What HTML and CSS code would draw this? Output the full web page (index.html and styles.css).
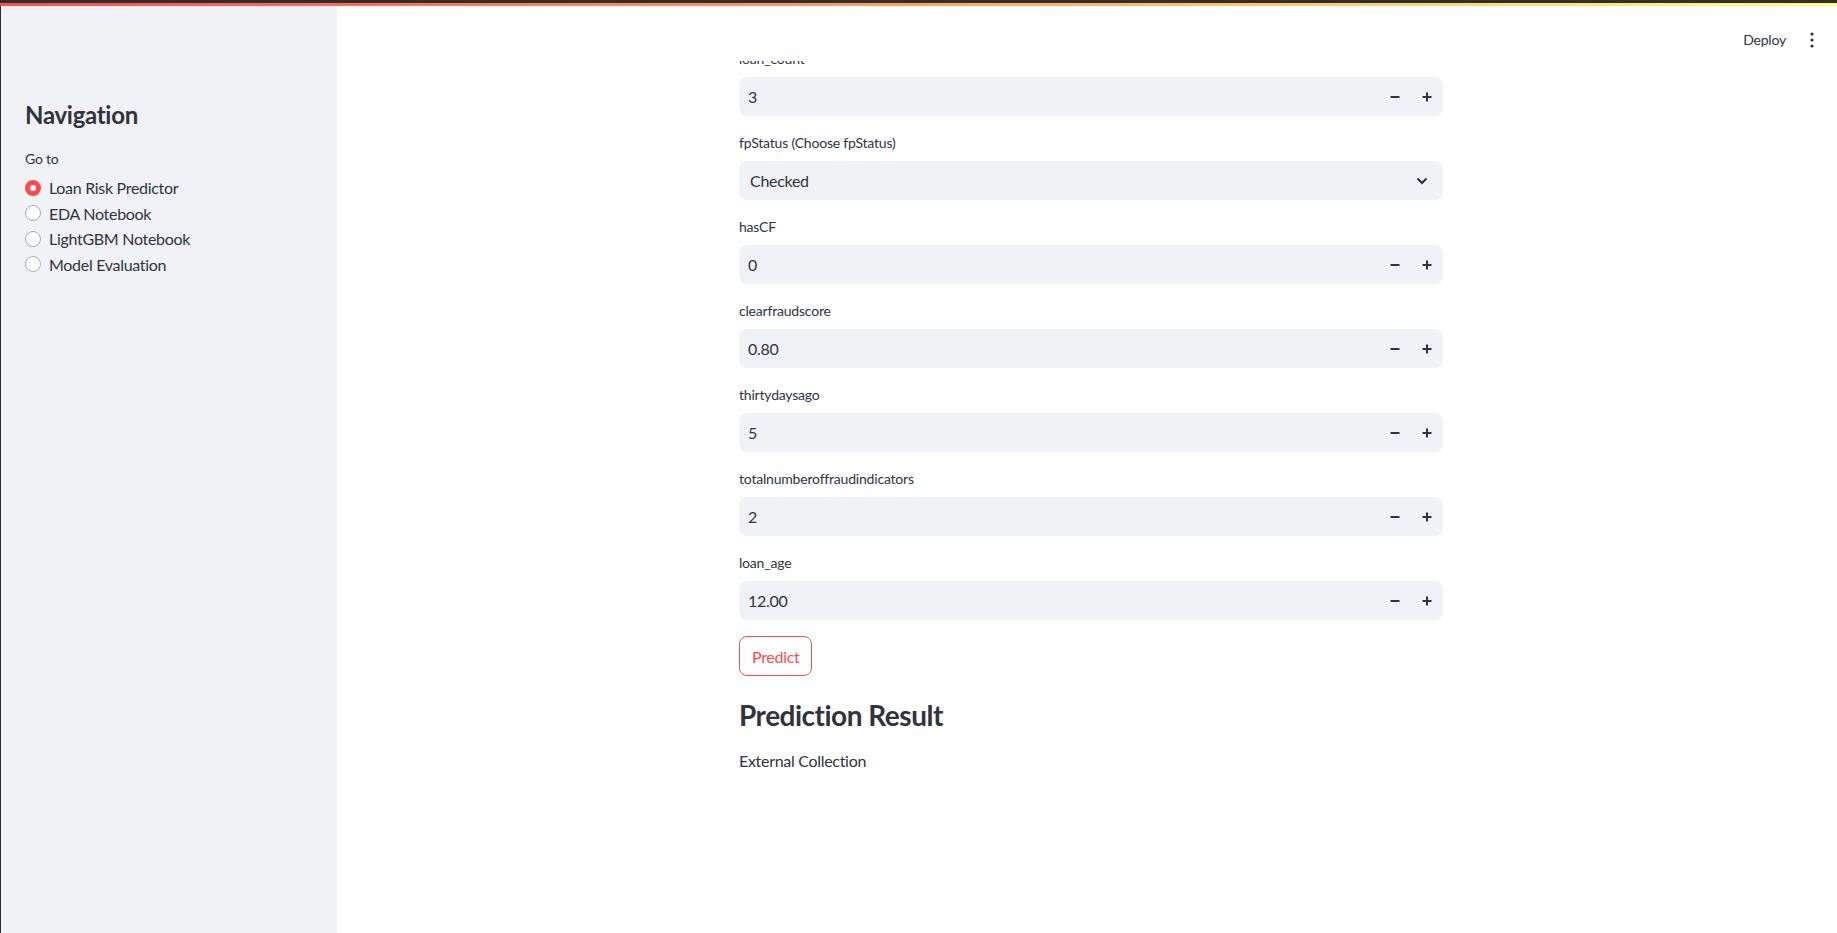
FILE: index.html
```html
<!DOCTYPE html>
<html lang="en">
<head>
<meta charset="utf-8">
<title>Loan Risk Predictor</title>
<link rel="stylesheet" href="styles.css">
</head>
<body>
<div class="topband"></div>
<div class="decoration"></div>
<div class="app">
  <aside class="sidebar">
    <h2 class="side-title">Navigation</h2>
    <div class="side-label">Go to</div>
    <ul class="radio-list">
      <li class="radio-item"><span class="radio radio-on"></span>Loan Risk Predictor</li>
      <li class="radio-item"><span class="radio"></span>EDA Notebook</li>
      <li class="radio-item"><span class="radio"></span>LightGBM Notebook</li>
      <li class="radio-item"><span class="radio"></span>Model Evaluation</li>
    </ul>
  </aside>
  <main class="main">
    <header class="header">
      <span class="deploy">Deploy</span>
      <span class="menu">
        <svg width="4" height="16" viewBox="0 0 4 16"><circle cx="2" cy="2" r="1.6" fill="#31333f"/><circle cx="2" cy="8" r="1.6" fill="#31333f"/><circle cx="2" cy="14" r="1.6" fill="#31333f"/></svg>
      </span>
    </header>
    <div class="block">
      <div class="field">
        <div class="label">loan_count</div>
        <div class="input"><span class="value">3</span><span class="steps"><span class="step"><svg width="10" height="10" viewBox="0 0 10 10"><path d="M0.5 5h9" stroke="#31333f" stroke-width="2"/></svg></span><span class="step"><svg width="10" height="10" viewBox="0 0 10 10"><path d="M0.5 5h9M5 0.5v9" stroke="#31333f" stroke-width="2"/></svg></span></span></div>
      </div>
      <div class="field">
        <div class="label">fpStatus (Choose fpStatus)</div>
        <div class="input select"><span class="value">Checked</span><span class="chev"><svg width="12" height="8" viewBox="0 0 12 8"><path d="M1.5 1.5l4.5 4.5 4.5-4.5" fill="none" stroke="#31333f" stroke-width="2"/></svg></span></div>
      </div>
      <div class="field">
        <div class="label">hasCF</div>
        <div class="input"><span class="value">0</span><span class="steps"><span class="step"><svg width="10" height="10" viewBox="0 0 10 10"><path d="M0.5 5h9" stroke="#31333f" stroke-width="2"/></svg></span><span class="step"><svg width="10" height="10" viewBox="0 0 10 10"><path d="M0.5 5h9M5 0.5v9" stroke="#31333f" stroke-width="2"/></svg></span></span></div>
      </div>
      <div class="field">
        <div class="label">clearfraudscore</div>
        <div class="input"><span class="value">0.80</span><span class="steps"><span class="step"><svg width="10" height="10" viewBox="0 0 10 10"><path d="M0.5 5h9" stroke="#31333f" stroke-width="2"/></svg></span><span class="step"><svg width="10" height="10" viewBox="0 0 10 10"><path d="M0.5 5h9M5 0.5v9" stroke="#31333f" stroke-width="2"/></svg></span></span></div>
      </div>
      <div class="field">
        <div class="label">thirtydaysago</div>
        <div class="input"><span class="value">5</span><span class="steps"><span class="step"><svg width="10" height="10" viewBox="0 0 10 10"><path d="M0.5 5h9" stroke="#31333f" stroke-width="2"/></svg></span><span class="step"><svg width="10" height="10" viewBox="0 0 10 10"><path d="M0.5 5h9M5 0.5v9" stroke="#31333f" stroke-width="2"/></svg></span></span></div>
      </div>
      <div class="field">
        <div class="label">totalnumberoffraudindicators</div>
        <div class="input"><span class="value">2</span><span class="steps"><span class="step"><svg width="10" height="10" viewBox="0 0 10 10"><path d="M0.5 5h9" stroke="#31333f" stroke-width="2"/></svg></span><span class="step"><svg width="10" height="10" viewBox="0 0 10 10"><path d="M0.5 5h9M5 0.5v9" stroke="#31333f" stroke-width="2"/></svg></span></span></div>
      </div>
      <div class="field">
        <div class="label">loan_age</div>
        <div class="input"><span class="value">12.00</span><span class="steps"><span class="step"><svg width="10" height="10" viewBox="0 0 10 10"><path d="M0.5 5h9" stroke="#31333f" stroke-width="2"/></svg></span><span class="step"><svg width="10" height="10" viewBox="0 0 10 10"><path d="M0.5 5h9M5 0.5v9" stroke="#31333f" stroke-width="2"/></svg></span></span></div>
      </div>
      <button class="btn" type="button">Predict</button>
      <h3 class="result-title">Prediction Result</h3>
      <p class="result-text">External Collection</p>
    </div>
  </main>
</div>
</body>
</html>
```

FILE: styles.css
```css
* { box-sizing: border-box; }
html, body { margin: 0; padding: 0; height: 100%; }
body {
  font-family: Lato, "Noto Sans", sans-serif;
  color: #31333f;
  background: #fff;
  overflow: hidden;
}
.topband { height: 3px; background: #2f2f2f; }
.decoration { height: 3px; background: linear-gradient(90deg, #ff4b4b, #fffd80); }
.app {
  display: flex;
  height: calc(100vh - 6px);
  border-left: 1px solid #2f2f2f;
}
.sidebar {
  width: 336px;
  flex: none;
  background: #f0f2f6;
  padding: 95px 24px 0 24px;
}
.side-title {
  margin: 0 0 17px 0;
  font-size: 24px;
  font-weight: 700;
  line-height: 1.2;
  letter-spacing: -0.3px;
}
.side-label {
  font-size: 14px;
  height: 24px;
  line-height: 24px;
  margin-bottom: 4px;
  letter-spacing: -0.2px;
}
.radio-list { list-style: none; margin: 0; padding: 0; }
.radio-item {
  display: flex;
  align-items: center;
  height: 25.6px;
  font-size: 16px;
  letter-spacing: -0.3px;
}
.radio {
  width: 16px;
  height: 16px;
  border-radius: 50%;
  border: 1px solid #a7aab3;
  background: #fff;
  margin-right: 8px;
  flex: none;
}
.radio-on {
  border: 5px solid #ff4b4b;
  background: #fff;
}
.main {
  flex: 1;
  position: relative;
  overflow: hidden;
  display: flex;
  justify-content: center;
  padding-left: 8px;
}
.header {
  position: absolute;
  top: 0;
  left: 0;
  right: 0;
  height: 55px;
  background: #fff;
  display: flex;
  align-items: center;
  justify-content: flex-end;
  padding-right: 23px;
  padding-top: 12px;
  z-index: 2;
}
.deploy { font-size: 14px; margin-right: 24px; letter-spacing: -0.2px; }
.menu { display: flex; align-items: center; }
.block { width: 704px; padding-top: 42px; }
.field { margin-bottom: 16px; }
.label {
  height: 20px;
  font-size: 14px;
  display: flex;
  align-items: center;
  margin-bottom: 9px;
  letter-spacing: -0.2px;
}
.input {
  height: 39px;
  background: #f0f2f6;
  border-radius: 8px;
  display: flex;
  align-items: center;
  justify-content: space-between;
  font-size: 16px;
  letter-spacing: -0.3px;
}
.value { padding-left: 9px; }
.select .value { padding-left: 11px; }
.steps { display: flex; height: 100%; }
.step {
  width: 32px;
  display: flex;
  align-items: center;
  justify-content: center;
}
.chev { width: 32px; display: flex; justify-content: center; margin-right: 5px; }
.btn {
  display: block;
  height: 40px;
  padding: 0 12px;
  border: 1px solid #ff4b4b;
  border-radius: 8px;
  background: #fff;
  color: #ff4b4b;
  font-family: inherit;
  font-size: 16px;
  letter-spacing: -0.3px;
  margin: 0 0 16px 0;
}
.result-title {
  margin: 0;
  padding: 7px 0 15px 0;
  font-size: 28px;
  font-weight: 700;
  line-height: 1.2;
  letter-spacing: -0.5px;
}
.result-text { margin: 0; font-size: 16px; line-height: 1.6; letter-spacing: -0.3px; }
```
